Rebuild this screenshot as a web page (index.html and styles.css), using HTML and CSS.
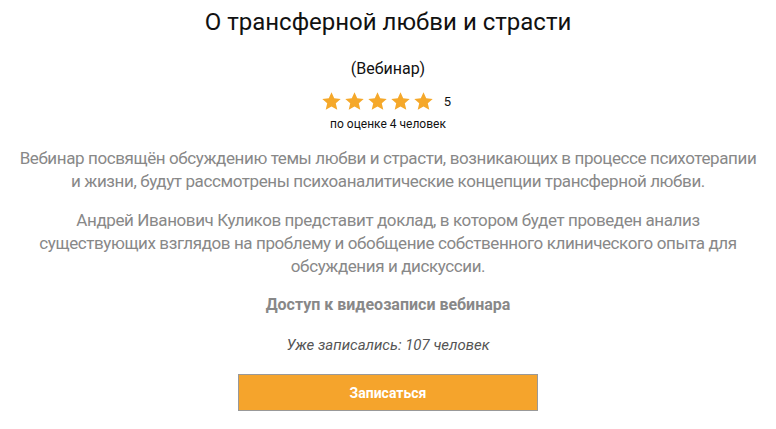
FILE: index.html
```html
<!DOCTYPE html>
<html lang="ru">
<head>
<meta charset="utf-8">
<link rel="stylesheet" href="styles.css">
</head>
<body>
<div class="page">
  <h1 class="title">О трансферной любви и страсти</h1>
  <div class="type">(Вебинар)</div>
  <div class="rating">
    <div class="stars">
      <svg viewBox="0 0 24 24"><path d="M12 1.5l3.1 6.9 7.4.7-5.6 5 1.7 7.4L12 17.6 5.4 21.5l1.7-7.4-5.6-5 7.4-.7z"/></svg>
      <svg viewBox="0 0 24 24"><path d="M12 1.5l3.1 6.9 7.4.7-5.6 5 1.7 7.4L12 17.6 5.4 21.5l1.7-7.4-5.6-5 7.4-.7z"/></svg>
      <svg viewBox="0 0 24 24"><path d="M12 1.5l3.1 6.9 7.4.7-5.6 5 1.7 7.4L12 17.6 5.4 21.5l1.7-7.4-5.6-5 7.4-.7z"/></svg>
      <svg viewBox="0 0 24 24"><path d="M12 1.5l3.1 6.9 7.4.7-5.6 5 1.7 7.4L12 17.6 5.4 21.5l1.7-7.4-5.6-5 7.4-.7z"/></svg>
      <svg viewBox="0 0 24 24"><path d="M12 1.5l3.1 6.9 7.4.7-5.6 5 1.7 7.4L12 17.6 5.4 21.5l1.7-7.4-5.6-5 7.4-.7z"/></svg>
    </div>
    <span class="score">5</span>
  </div>
  <div class="votes">по оценке 4 человек</div>
  <p class="desc first">Вебинар посвящён обсуждению темы любви и страсти, возникающих в процессе психотерапии и жизни, будут рассмотрены психоаналитические концепции трансферной любви.</p>
  <p class="desc">Андрей Иванович Куликов представит доклад, в котором будет проведен анализ<br>существующих взглядов на проблему и обобщение собственного клинического опыта для обсуждения и дискуссии.</p>
  <div class="access">Доступ к видеозаписи вебинара</div>
  <div class="count">Уже записались: 107 человек</div>
  <button class="btn">Записаться</button>
</div>
</body>
</html>
```
FILE: styles.css
```css
html, body { margin: 0; padding: 0; background: #fff; }
body { font-family: Roboto, "Noto Sans", sans-serif; }
.page {
  display: flex;
  flex-direction: column;
  align-items: center;
  text-align: center;
  padding: 7px 16px 0;
}
.title {
  margin: 0;
  font-size: 24px;
  font-weight: 400;
  color: #111;
  line-height: 30px;
}
.type {
  margin-top: 22px;
  font-size: 16px;
  color: #111;
  line-height: 20px;
}
.rating {
  margin-top: 11px;
  height: 22px;
  display: flex;
  align-items: center;
  gap: 10px;
  margin-right: 4px;
}
.stars { display: flex; gap: 2px; }
.stars svg { width: 21px; height: 21px; fill: #F5A82A; }
.score { font-size: 13px; color: #111; }
.votes {
  margin-top: 5px;
  font-size: 12px;
  color: #111;
  line-height: 14px;
}
.desc {
  margin: 16px 0 0;
  font-size: 17px;
  line-height: 23px;
  color: #888;
  letter-spacing: -0.4px;
  max-width: 744px;
}
.desc.first { margin-top: 16px; }
.access {
  margin-top: 17px;
  font-size: 16px;
  font-weight: 700;
  color: #888;
  line-height: 20px;
}
.count {
  margin-top: 20px;
  font-size: 15px;
  font-style: italic;
  color: #555;
  line-height: 20px;
}
.btn {
  margin-top: 19px;
  width: 300px;
  height: 37px;
  background: #F5A42C;
  border: 1px solid #999;
  color: #fff;
  font-family: Roboto, sans-serif;
  font-weight: 700;
  font-size: 14px;
  padding: 0;
}
```
